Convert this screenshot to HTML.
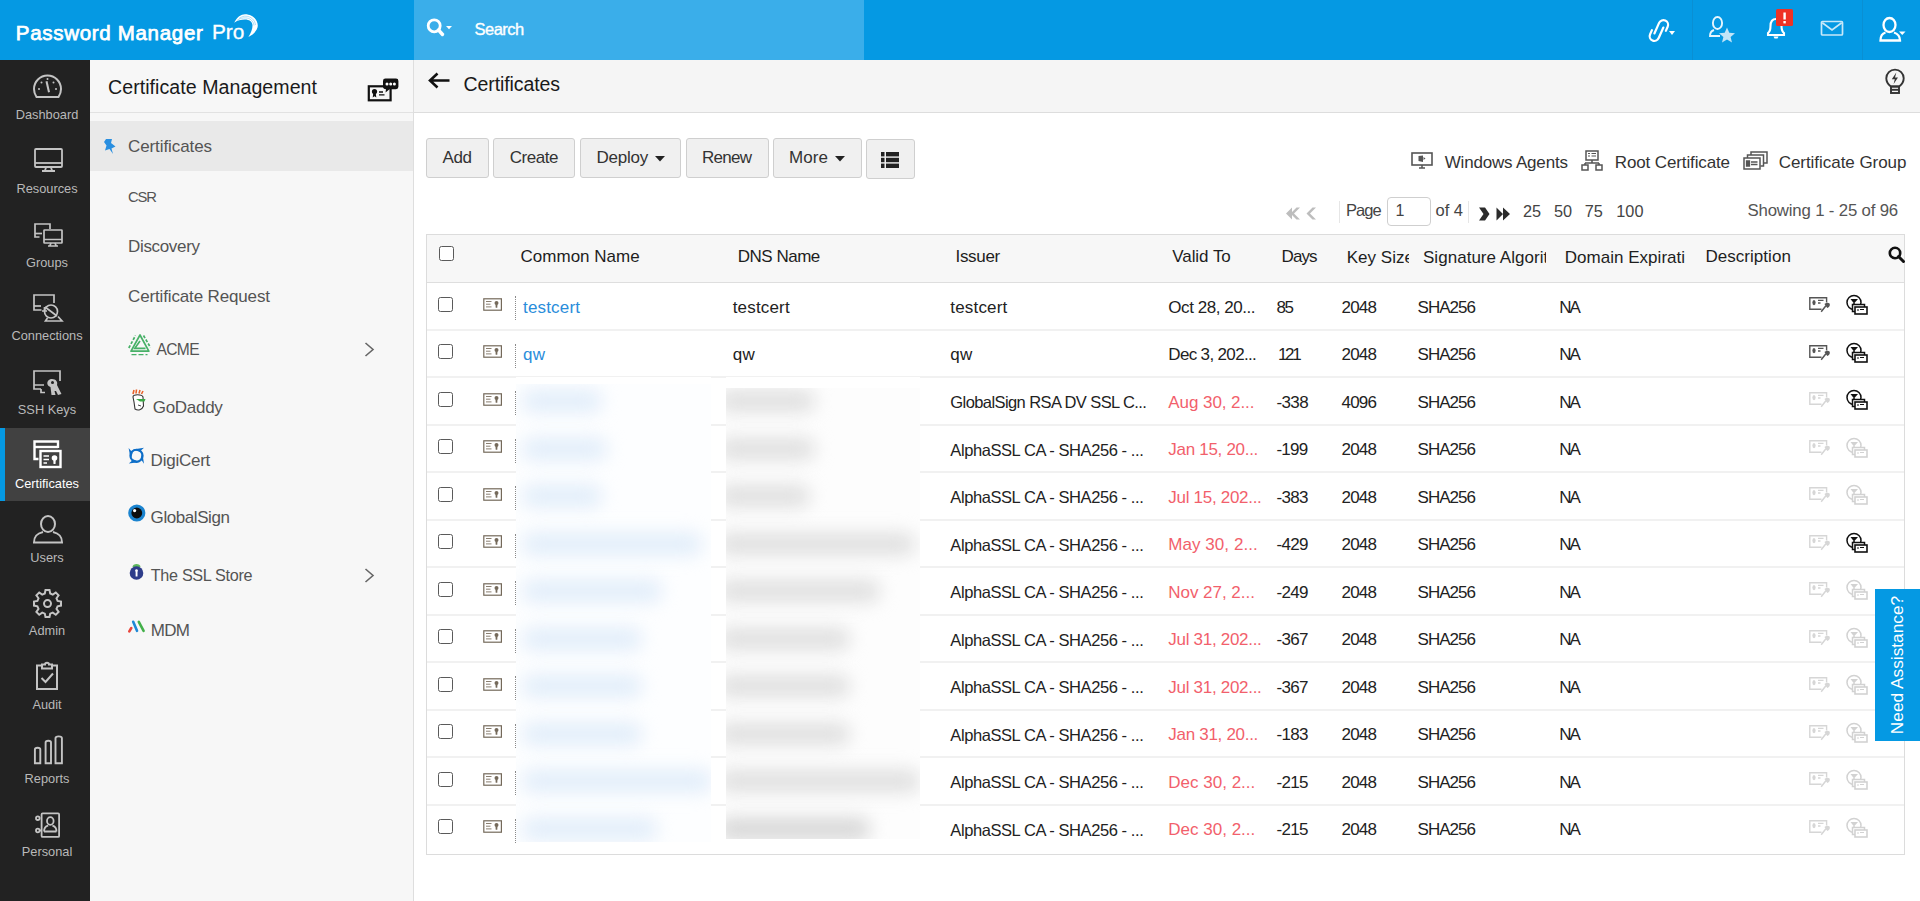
<!DOCTYPE html>
<html><head><meta charset="utf-8"><title>Certificates</title>
<style>
html,body{margin:0;padding:0;width:1920px;height:901px;overflow:hidden;background:#fff;}
body{position:relative;font-family:"Liberation Sans",sans-serif;}
.t{position:absolute;white-space:nowrap;font-family:"Liberation Sans",sans-serif;}
.r{position:absolute;box-sizing:border-box;}
svg.r{overflow:visible;}
</style></head><body>

<div class="r" style="left:0px;top:0px;width:1920px;height:60px;background:#0599e3"></div>
<div class="r" style="left:414px;top:0px;width:450px;height:60px;background:#3aaeea"></div>
<div class="t " style="left:15.8px;top:22.68px;font-size:20.5px;line-height:20.5px;color:#fff;font-weight:400;letter-spacing:0.693px;-webkit-text-stroke:0.75px #fff;">Password Manager</div>
<div class="t " style="left:212px;top:22.42px;font-size:20.8px;line-height:20.8px;color:#fff;font-weight:400;letter-spacing:-0.022px;-webkit-text-stroke:0.3px #fff;">Pro</div>
<svg class="r" style="left:232px;top:12px;" width="28" height="27" viewBox="0 0 28 27"><path d="M2.2 10.7 C5 5 9 2.2 13 2.2 C20 2.2 25.8 7 25.8 13.8 C25.8 18 21 23 16.4 24.9 C19 21 20.5 17 20.5 13.5 C20.5 9.5 17 7.5 13 7.5 C9 7.5 5 8.5 2.2 10.7 Z" fill="#fff"/><path d="M7 6.5 C10 4.5 12 4 14 4.2 C19 4.5 23 8 23.5 13 M5 8.5 C8 6.3 11 5.8 13.5 5.9 C18 6 21.5 9 22 13.5" fill="none" stroke="#7cc8f0" stroke-width="0.6"/></svg>
<svg class="r" style="left:424px;top:16px;" width="30" height="24" viewBox="0 0 30 24"><circle cx="10.2" cy="9.8" r="6" fill="none" stroke="#fff" stroke-width="2.8"/><path d="M14.5 14 L18.5 18.5" stroke="#fff" stroke-width="3.4" stroke-linecap="round"/><path d="M22 10 L28 10 L25 13.3 Z" fill="#fff"/></svg>
<div class="t " style="left:474.5px;top:21.18px;font-size:16.5px;line-height:16.5px;color:#fff;font-weight:400;letter-spacing:-0.501px;-webkit-text-stroke:0.35px #fff;">Search</div>
<div class="r" style="left:1692px;top:0px;width:1px;height:60px;background:#0a8fd3"></div>
<div class="r" style="left:1862px;top:0px;width:1px;height:60px;background:#0a8fd3"></div>
<svg class="r" style="left:1648px;top:16px;" width="30" height="28" viewBox="0 0 30 28"><g transform="rotate(24 11 14)" fill="none" stroke="#fff" stroke-width="2.2" stroke-linecap="round"><path d="M8.2 19 L8.2 7.5 A4.7 4.7 0 0 1 17.6 7.5 L17.6 12"/><path d="M14 10 L14 21.5 A4.7 4.7 0 0 1 4.6 21.5 L4.6 17"/></g><path d="M21 15 L27 15 L24 19 Z" fill="#fff"/></svg>
<svg class="r" style="left:1708px;top:16px;" width="28" height="27" viewBox="0 0 28 27"><g fill="none" stroke="#e6f5fd" stroke-width="1.9"><ellipse cx="9.5" cy="7" rx="4.6" ry="6"/><path d="M6 14 C3 15 2 17 2 20 L12 20"/></g><path d="M19 11.5 L21.3 16.8 L27 17.3 L22.6 21 L24 26.5 L19 23.5 L14 26.5 L15.4 21 L11 17.3 L16.7 16.8 Z" fill="#c2e4f7"/></svg>
<svg class="r" style="left:1765px;top:8px;" width="30" height="32" viewBox="0 0 30 32"><g fill="none" stroke="#fff" stroke-width="2.1"><path d="M3 27 L3 25 C5 23.5 5.5 21.5 5.5 18 C5.5 13.5 7.5 11 11 11 C14.5 11 16.5 13.5 16.5 18 C16.5 21.5 17 23.5 19 25 L19 27 Z"/></g><path d="M8.5 28.5 L13.5 28.5 L12.5 30.5 L9.5 30.5 Z" fill="#fff"/><rect x="11" y="1" width="17" height="17" rx="1.5" fill="#ee3226"/><rect x="18.4" y="4.5" width="2.4" height="7" fill="#fff"/><rect x="18.4" y="13" width="2.4" height="2.4" fill="#fff"/></svg>
<svg class="r" style="left:1820px;top:20px;" width="25" height="18" viewBox="0 0 25 18"><rect x="1.5" y="1.5" width="21" height="13.5" rx="1" fill="none" stroke="#c8e8f9" stroke-width="1.7"/><path d="M2.3 2.8 L12 10 L21.7 2.8" fill="none" stroke="#c8e8f9" stroke-width="1.7"/></svg>
<svg class="r" style="left:1879px;top:17px;" width="28" height="26" viewBox="0 0 28 26"><g fill="none" stroke="#fff" stroke-width="2.3"><ellipse cx="10.5" cy="8" rx="6" ry="7"/><path d="M6.5 15.5 C3 16.5 1.5 19 1.5 23.5 L21 23.5 C21 20 19.5 17 15 15.5"/></g><path d="M20 14.5 L26.5 14.5 L23.25 18 Z" fill="#fff"/></svg>
<div class="r" style="left:0px;top:60px;width:90px;height:841px;background:#222222"></div>
<div class="r" style="left:0px;top:427.5px;width:90px;height:73px;background:#414141"></div>
<div class="r" style="left:0px;top:427.5px;width:5px;height:73px;background:#0599e3"></div>
<div class="t" style="left:0;width:94px;text-align:center;top:109.32px;font-size:12.8px;line-height:12.8px;color:#b9b9b9">Dashboard</div>
<div class="t" style="left:0;width:94px;text-align:center;top:183.02px;font-size:12.8px;line-height:12.8px;color:#b9b9b9">Resources</div>
<div class="t" style="left:0;width:94px;text-align:center;top:256.72px;font-size:12.8px;line-height:12.8px;color:#b9b9b9">Groups</div>
<div class="t" style="left:0;width:94px;text-align:center;top:330.42px;font-size:12.8px;line-height:12.8px;color:#b9b9b9">Connections</div>
<div class="t" style="left:0;width:94px;text-align:center;top:404.12px;font-size:12.8px;line-height:12.8px;color:#b9b9b9">SSH Keys</div>
<div class="t" style="left:0;width:94px;text-align:center;top:477.82px;font-size:12.8px;line-height:12.8px;color:#fff">Certificates</div>
<div class="t" style="left:0;width:94px;text-align:center;top:551.52px;font-size:12.8px;line-height:12.8px;color:#b9b9b9">Users</div>
<div class="t" style="left:0;width:94px;text-align:center;top:625.22px;font-size:12.8px;line-height:12.8px;color:#b9b9b9">Admin</div>
<div class="t" style="left:0;width:94px;text-align:center;top:698.92px;font-size:12.8px;line-height:12.8px;color:#b9b9b9">Audit</div>
<div class="t" style="left:0;width:94px;text-align:center;top:772.62px;font-size:12.8px;line-height:12.8px;color:#b9b9b9">Reports</div>
<div class="t" style="left:0;width:94px;text-align:center;top:846.32px;font-size:12.8px;line-height:12.8px;color:#b9b9b9">Personal</div>
<svg class="r" style="left:33px;top:73.3px;" width="30" height="26" viewBox="0 0 30 26"><g fill="none" stroke="#c4c4c4" stroke-width="2"><path d="M3.5 24 C1.5 21 1 18.5 1 16 C1 8.5 7 2.5 14.5 2.5 C22 2.5 28 8.5 28 16 C28 18.5 27.5 21 25.5 24 Z"/></g><path d="M12.5 8.5 L14.5 8 L17 19 L15 19.5 Z" fill="#c4c4c4"/><circle cx="6" cy="16" r="1" fill="#c4c4c4"/><circle cx="23" cy="16" r="1" fill="#c4c4c4"/><circle cx="8.5" cy="9.5" r="1" fill="#c4c4c4"/><circle cx="20.5" cy="9.5" r="1" fill="#c4c4c4"/><circle cx="14.5" cy="6" r="1" fill="#c4c4c4"/></svg>
<svg class="r" style="left:34px;top:148px;" width="30" height="24" viewBox="0 0 30 24"><g fill="none" stroke="#c4c4c4" stroke-width="1.8"><rect x="1" y="1" width="27" height="18" rx="1"/><path d="M1 15 L28 15"/><path d="M12 19.5 L11 22.5 M17 19.5 L18 22.5 M8 23 L21 23"/></g></svg>
<svg class="r" style="left:34px;top:222.5px;" width="30" height="24" viewBox="0 0 30 24"><g fill="none" stroke="#c4c4c4" stroke-width="1.7"><path d="M5.5 14 L1 14 L1 1 L16 1 L16 6"/><path d="M1 10.5 L8 10.5"/><rect x="10" y="7" width="18" height="13" rx="0.5"/><path d="M10 16.5 L28 16.5 M17 20 L16 22.5 M21 20 L22 22.5 M14 23 L24 23"/></g></svg>
<svg class="r" style="left:33px;top:294px;" width="30" height="28" viewBox="0 0 30 28"><g fill="none" stroke="#c4c4c4" stroke-width="1.7"><path d="M8.5 16 L1 16 L1 1 L21 1 L21 9"/><path d="M1 12 L8 12"/><circle cx="18" cy="17.5" r="6.5"/><path d="M12 13 L24 22 M14.5 24 L12.5 27 L29 27 L25 22.5"/><path d="M9 17 L14 17 M11.5 13 L11.5 17"/></g></svg>
<svg class="r" style="left:33px;top:370px;" width="30" height="26" viewBox="0 0 30 26"><g fill="none" stroke="#c4c4c4" stroke-width="1.7"><path d="M8 19 L1 19 L1 1 L27 1 L27 11"/><path d="M8 19 L8 22.5 L12 22.5 M1 15 L11 15"/></g><path d="M19 9 C23 9 25 12 24 15 L28.5 24 L25 25 L23 21 L21.5 21 L22.5 25 L18.5 25 L17.5 17 C14.5 16 13.5 13 15 11 C16 9.5 17.5 9 19 9 Z" fill="#c4c4c4"/><circle cx="19.5" cy="12.5" r="1.5" fill="#222"/></svg>
<svg class="r" style="left:33px;top:440.2px;" width="30" height="29" viewBox="0 0 30 29"><g fill="none" stroke="#fff" stroke-width="2.4"><path d="M5.5 19 L1.5 19 L1.5 1.5 L25 1.5 L25 8"/><path d="M1.5 7 L25 7"/><rect x="7.5" y="11" width="20" height="16"/></g><path d="M10.5 16 L16 16 M10.5 19.5 L16 19.5 M10.5 23 L14 23" stroke="#fff" stroke-width="1.5"/><circle cx="21.5" cy="18" r="2.8" fill="#fff"/><path d="M20.3 20 L22.7 20 L22.5 24 L20.5 24 Z" fill="#fff"/></svg>
<svg class="r" style="left:33px;top:514.6px;" width="30" height="30" viewBox="0 0 30 30"><g fill="none" stroke="#c4c4c4" stroke-width="2"><ellipse cx="15" cy="9" rx="7" ry="8"/><path d="M10 17 C4 18.5 1 21 1 27.5 L29 27.5 C29 21 26 18.5 20 17"/></g></svg>
<svg class="r" style="left:33px;top:588.5px;" width="30" height="30" viewBox="0 0 30 30"><g fill="none" stroke="#c4c4c4" stroke-width="2"><path d="M12.5 1 L16.5 1 L17.2 4.5 L19.8 5.6 L22.8 3.5 L25.6 6.3 L23.5 9.3 L24.6 11.9 L28 12.6 L28 16.6 L24.6 17.3 L23.5 19.9 L25.6 22.9 L22.8 25.7 L19.8 23.6 L17.2 24.7 L16.5 28 L12.5 28 L11.8 24.7 L9.2 23.6 L6.2 25.7 L3.4 22.9 L5.5 19.9 L4.4 17.3 L1 16.6 L1 12.6 L4.4 11.9 L5.5 9.3 L3.4 6.3 L6.2 3.5 L9.2 5.6 L11.8 4.5 Z"/><circle cx="14.5" cy="14.6" r="3.5"/></g></svg>
<svg class="r" style="left:35px;top:661px;" width="24" height="30" viewBox="0 0 24 30"><g fill="none" stroke="#c4c4c4" stroke-width="2"><path d="M7 4.5 L2 4.5 L2 28 L22 28 L22 4.5 L17 4.5"/><path d="M7 7.5 L7 3.5 L10 3.5 C10 1 14 1 14 3.5 L17 3.5 L17 7.5 Z"/><path d="M6.5 17 L10.5 21 L18 12.5"/></g></svg>
<svg class="r" style="left:33px;top:735px;" width="30" height="31" viewBox="0 0 30 31"><g fill="none" stroke="#c4c4c4" stroke-width="1.9"><path d="M1.9 28.3 L1.9 14.5 Q1.9 12.7 4.6 12.7 Q7.3 12.7 7.3 14.5 L7.3 28.3 Z"/><path d="M12.6 28.3 L12.6 7.5 Q12.6 5.7 15.3 5.7 Q18 5.7 18 7.5 L18 28.3 Z"/><path d="M22.5 28.3 L22.5 3.2 Q22.5 1.4 25.7 1.4 Q28.9 1.4 28.9 3.2 L28.9 28.3 Z"/></g></svg>
<svg class="r" style="left:33px;top:810.5px;" width="30" height="29" viewBox="0 0 30 29"><g fill="none" stroke="#c4c4c4" stroke-width="1.8"><rect x="8.6" y="2.4" width="17.5" height="23.5" rx="1"/><circle cx="4.8" cy="7.2" r="1.8"/><circle cx="4.8" cy="19.5" r="1.8"/><path d="M6.6 19.5 L9 19.5"/><ellipse cx="17.3" cy="10" rx="3.3" ry="3.9"/><path d="M11 20.5 C11 16.5 13.5 15 15.2 14.6 M23.5 20.5 C23.5 16.5 21 15 19.4 14.6 M11 20.5 L23.5 20.5"/></g></svg>
<div class="r" style="left:90px;top:60px;width:323px;height:841px;background:#f7f7f7"></div>
<div class="r" style="left:413px;top:60px;width:1px;height:841px;background:#dedede"></div>
<div class="r" style="left:90px;top:112px;width:323px;height:1px;background:#e2e2e2"></div>
<div class="t " style="left:108px;top:77.94px;font-size:19.6px;line-height:19.6px;color:#1a1a1a;font-weight:400;letter-spacing:0.045px;">Certificate Management</div>
<svg class="r" style="left:366px;top:78px;" width="34" height="24" viewBox="0 0 34 24"><rect x="2.8" y="8.3" width="21.8" height="14" fill="none" stroke="#111" stroke-width="2.2"/><path d="M17 3 Q17 0.6 19.4 0.6 L30 0.6 Q32.4 0.6 32.4 3 L32.4 8.8 Q32.4 11.2 30 11.2 L23.5 11.2 L19.5 14.5 L20 11.2 Q17 11.2 17 8.8 Z" fill="#111"/><circle cx="21" cy="5.9" r="1.5" fill="#fff"/><circle cx="24.7" cy="5.9" r="1.5" fill="#fff"/><circle cx="28.4" cy="5.9" r="1.5" fill="#fff"/><circle cx="8.5" cy="13.5" r="2.6" fill="#111"/><path d="M7.2 15.5 L9.8 15.5 L10.3 19.5 L8.5 18.3 L6.7 19.5 Z" fill="#111"/><path d="M13 14 L17 14 M13 16.8 L18.5 16.8" stroke="#111" stroke-width="1.3"/></svg>
<div class="r" style="left:90px;top:121px;width:323px;height:50px;background:#e9e9e9"></div>
<svg class="r" style="left:103px;top:138px;" width="14" height="17" viewBox="0 0 14 17"><path d="M3 1 L9 1 L8 5 L12.5 8.5 L8.5 10.5 L10 16 L6.5 11 L2 12.5 L3.5 7.5 L1 4 Z" fill="#2a8fe0"/></svg>
<div class="t " style="left:128px;top:137.95px;font-size:17px;line-height:17px;color:#545454;font-weight:400;letter-spacing:-0.091px;">Certificates</div>
<div class="t " style="left:128px;top:189.62px;font-size:14.8px;line-height:14.8px;color:#545454;font-weight:400;letter-spacing:-1.214px;">CSR</div>
<div class="t " style="left:128px;top:237.55px;font-size:17px;line-height:17px;color:#545454;font-weight:400;letter-spacing:-0.329px;">Discovery</div>
<div class="t " style="left:128px;top:287.55px;font-size:17px;line-height:17px;color:#545454;font-weight:400;letter-spacing:-0.144px;">Certificate Request</div>
<div class="t " style="left:156.6px;top:342.24px;font-size:15.6px;line-height:15.6px;color:#545454;font-weight:400;letter-spacing:-0.695px;">ACME</div>
<div class="t " style="left:152.8px;top:398.85px;font-size:17px;line-height:17px;color:#545454;font-weight:400;letter-spacing:-0.304px;">GoDaddy</div>
<div class="t " style="left:150.6px;top:451.55px;font-size:17px;line-height:17px;color:#545454;font-weight:400;letter-spacing:-0.239px;">DigiCert</div>
<div class="t " style="left:150.6px;top:508.55px;font-size:17px;line-height:17px;color:#545454;font-weight:400;letter-spacing:-0.426px;">GlobalSign</div>
<div class="t " style="left:150.8px;top:567.03px;font-size:16.2px;line-height:16.2px;color:#545454;font-weight:400;letter-spacing:-0.327px;">The SSL Store</div>
<div class="t " style="left:150.8px;top:622.25px;font-size:17px;line-height:17px;color:#545454;font-weight:400;letter-spacing:-0.715px;">MDM</div>
<svg class="r" style="left:364px;top:341.5px;" width="11" height="15" viewBox="0 0 11 15"><path d="M1.5 1 L9 7.5 L1.5 14" fill="none" stroke="#666" stroke-width="1.6"/></svg>
<svg class="r" style="left:364px;top:568.0px;" width="11" height="15" viewBox="0 0 11 15"><path d="M1.5 1 L9 7.5 L1.5 14" fill="none" stroke="#666" stroke-width="1.6"/></svg>
<svg class="r" style="left:128px;top:334px;" width="24" height="22" viewBox="0 0 24 22"><g fill="none" stroke="#47b067" stroke-width="1.7"><path d="M0.8 14 L7.5 1.5" stroke-dasharray="3 1.6"/><path d="M15.5 1.5 L22.5 13.5" stroke-dasharray="3 1.6"/><path d="M12 1 L3 17.2 L20.8 17.2 Z" stroke-linejoin="round"/><path d="M12 7 L6.8 14.3 L17.5 14.3"/><path d="M3.5 20.6 L19.5 20.6" stroke-dasharray="5 2" stroke-width="1.4"/></g></svg>
<svg class="r" style="left:130px;top:389px;" width="17" height="24" viewBox="0 0 17 24"><path d="M3 5 L4 1 M6 4.5 L6.5 0.5 M9 4.5 L10 1 M11.5 5 L13 2" stroke="#e8622a" stroke-width="1.6"/><path d="M3 8 C3 5 12 5 13 8 L13.5 17 C12 21 8 22 5 20 L4 13 Z" fill="#fff" stroke="#333" stroke-width="1.1"/><path d="M6 10 L15.5 10 L14.5 12.5 L10 12.5 Z" fill="#3aa845"/><path d="M8 16 L11 17" stroke="#333" stroke-width="0.9"/></svg>
<svg class="r" style="left:128px;top:446px;" width="18" height="19" viewBox="0 0 18 19"><circle cx="8.5" cy="9.8" r="6.1" fill="none" stroke="#0d6ec8" stroke-width="2.1"/><path d="M5 3.6 L16 1.8 L11.5 5.8 Z M14.2 6.2 L16 17.8 L12.6 12.8 Z M12 16 L0.8 17.6 L5.4 13.6 Z M2.8 13.4 L0.6 2 L4.6 6.8 Z" fill="#0d6ec8"/></svg>
<svg class="r" style="left:128px;top:504px;" width="18" height="18" viewBox="0 0 18 18"><circle cx="8.8" cy="9" r="8.6" fill="#1b84cf"/><circle cx="8.8" cy="9" r="5.4" fill="#0d0d0d"/><circle cx="6.6" cy="6.6" r="1.6" fill="#fff"/></svg>
<svg class="r" style="left:129px;top:562px;" width="15" height="18" viewBox="0 0 15 18"><path d="M3.5 5 C3.5 1 11.5 1 11.5 5 Z" fill="#5db85c"/><circle cx="7.5" cy="11" r="6.8" fill="#2e3d8a"/><rect x="6.6" y="8.5" width="1.9" height="6" fill="#fff"/><circle cx="7.5" cy="8.5" r="1.3" fill="#fff"/></svg>
<svg class="r" style="left:128px;top:620px;" width="18" height="13" viewBox="0 0 18 13"><path d="M1.3 11.3 L3.3 8" stroke="#e9453c" stroke-width="2.6" stroke-linecap="round"/><path d="M5.2 1.8 L9 10.8" stroke="#1e88d6" stroke-width="2.6" stroke-linecap="round"/><path d="M10.8 1.8 L15.6 10.8" stroke="#43b04a" stroke-width="2.6" stroke-linecap="round"/></svg>
<div class="r" style="left:414px;top:60px;width:1506px;height:52px;background:#f5f5f5"></div>
<div class="r" style="left:414px;top:112px;width:1506px;height:1px;background:#dddddd"></div>
<svg class="r" style="left:427px;top:71px;" width="24" height="20" viewBox="0 0 24 20"><path d="M22.5 9.5 L4 9.5 M10.5 2.5 L3 9.5 L10.5 16.5" fill="none" stroke="#111" stroke-width="2.6"/></svg>
<div class="t " style="left:463.5px;top:74.62px;font-size:19.5px;line-height:19.5px;color:#1a1a1a;font-weight:400;letter-spacing:-0.091px;">Certificates</div>
<svg class="r" style="left:1884px;top:68px;" width="22" height="27" viewBox="0 0 22 27"><g fill="none" stroke="#333" stroke-width="1.9"><path d="M6.8 18.5 C4 16.5 2.3 13.8 2.3 10.3 C2.3 5.4 6.2 1.6 11 1.6 C15.8 1.6 19.7 5.4 19.7 10.3 C19.7 13.8 18 16.5 15.2 18.5 Z"/><rect x="7" y="18.5" width="8" height="6.5"/><path d="M7 21.8 L15 21.8"/></g><path d="M12.3 4.5 L7.8 11.2 L10.8 11.2 L9.6 16 L14 9.5 L11 9.5 Z" fill="#333"/></svg>
<div class="r" style="left:426px;top:138px;width:63px;height:40px;background:#f0f0f0;border:1px solid #cfcfcf;border-radius:3px"></div>
<div class="t " style="left:442.6px;top:148.85px;font-size:17px;line-height:17px;color:#333;font-weight:400;letter-spacing:-0.430px;">Add</div>
<div class="r" style="left:493px;top:138px;width:82px;height:40px;background:#f0f0f0;border:1px solid #cfcfcf;border-radius:3px"></div>
<div class="t " style="left:509.7px;top:148.85px;font-size:17px;line-height:17px;color:#333;font-weight:400;letter-spacing:-0.440px;">Create</div>
<div class="r" style="left:580px;top:138px;width:101px;height:40px;background:#f0f0f0;border:1px solid #cfcfcf;border-radius:3px"></div>
<div class="t " style="left:596.5px;top:148.85px;font-size:17px;line-height:17px;color:#333;font-weight:400;letter-spacing:-0.251px;">Deploy</div>
<svg class="r" style="left:655px;top:156px;" width="10" height="6" viewBox="0 0 10 6"><path d="M0 0 L10 0 L5 5.5 Z" fill="#222"/></svg>
<div class="r" style="left:686px;top:138px;width:83px;height:40px;background:#f0f0f0;border:1px solid #cfcfcf;border-radius:3px"></div>
<div class="t " style="left:702px;top:148.85px;font-size:17px;line-height:17px;color:#333;font-weight:400;letter-spacing:-0.739px;">Renew</div>
<div class="r" style="left:773px;top:138px;width:89px;height:40px;background:#f0f0f0;border:1px solid #cfcfcf;border-radius:3px"></div>
<div class="t " style="left:789px;top:148.85px;font-size:17px;line-height:17px;color:#333;font-weight:400;letter-spacing:0.080px;">More</div>
<svg class="r" style="left:835px;top:156px;" width="10" height="6" viewBox="0 0 10 6"><path d="M0 0 L10 0 L5 5.5 Z" fill="#222"/></svg>
<div class="r" style="left:866px;top:139px;width:49px;height:40px;background:#f0f0f0;border:1px solid #cfcfcf;border-radius:3px"></div>
<svg class="r" style="left:881px;top:151.5px;" width="18" height="16" viewBox="0 0 18 16"><g fill="#222"><rect x="0" y="0" width="3.5" height="4.4"/><rect x="5" y="0" width="13" height="4.4"/><rect x="0" y="5.8" width="3.5" height="4.4"/><rect x="5" y="5.8" width="13" height="4.4"/><rect x="0" y="11.6" width="3.5" height="4.4"/><rect x="5" y="11.6" width="13" height="4.4"/></g></svg>
<div class="t " style="left:1444.7px;top:154.25px;font-size:17px;line-height:17px;color:#333;font-weight:400;letter-spacing:-0.186px;">Windows Agents</div>
<div class="t " style="left:1614.8px;top:154.25px;font-size:17px;line-height:17px;color:#333;font-weight:400;letter-spacing:-0.129px;">Root Certificate</div>
<div class="t " style="left:1778.7px;top:154.25px;font-size:17px;line-height:17px;color:#333;font-weight:400;letter-spacing:-0.045px;">Certificate Group</div>
<svg class="r" style="left:1411px;top:152px;" width="22" height="17" viewBox="0 0 22 17"><rect x="1" y="1" width="20" height="12" fill="none" stroke="#555" stroke-width="1.6"/><path d="M8 16 L14 16 M11 13 L11 16" stroke="#555" stroke-width="1.5"/><path d="M7.5 4 L12 3.5 L12 10 L7.5 9 Z" fill="#555"/><path d="M12.5 5 L14.5 6.5 L12.5 8 Z" fill="#555"/></svg>
<svg class="r" style="left:1581px;top:150px;" width="22" height="21" viewBox="0 0 22 21"><g fill="none" stroke="#555" stroke-width="1.5"><rect x="5" y="1" width="12" height="9"/><path d="M11 10 L11 13 M4 13 L18 13 M4 13 L4 15 M18 13 L18 15"/><rect x="1" y="15" width="6" height="5"/><rect x="15" y="15" width="6" height="5"/></g><path d="M7 3.5 L9 3.5 M7 6 L9 6 M10.5 3.5 L15 3.5 M10.5 6 L15 6" stroke="#555" stroke-width="1.2"/></svg>
<svg class="r" style="left:1743px;top:151px;" width="25" height="19" viewBox="0 0 25 19"><g fill="none" stroke="#555" stroke-width="1.5"><path d="M8 4 L8 1 L24 1 L24 12 L21 12"/><path d="M4.5 7 L4.5 4 L20.5 4 L20.5 15 L17.5 15"/><rect x="1" y="7" width="16" height="11"/></g><path d="M3.5 10 L6.5 10 L6.5 15 L3.5 15 Z M8 11 L14.5 11 M8 13.5 L14.5 13.5" stroke="#555" stroke-width="1.3" fill="#555"/></svg>
<svg class="r" style="left:1285px;top:207px;" width="16" height="13" viewBox="0 0 16 13"><path d="M7 0.5 L1 6.5 L7 12.5 L7 8 L11.5 12.5 L15 12.5 L9 6.5 L15 0.5 L11.5 0.5 L7 5 Z" fill="#bdbdbd"/></svg>
<svg class="r" style="left:1306px;top:207px;" width="11" height="13" viewBox="0 0 11 13"><path d="M10 0.5 L4 6.5 L10 12.5 L6.5 12.5 L0.5 6.5 L6.5 0.5 Z" fill="#bdbdbd"/></svg>
<div class="r" style="left:1339px;top:201px;width:1px;height:22px;background:#e6e6e6"></div>
<div class="t " style="left:1346px;top:202.47px;font-size:16.5px;line-height:16.5px;color:#444;font-weight:400;letter-spacing:-0.943px;">Page</div>
<div class="r" style="left:1387px;top:197px;width:44px;height:29px;background:#fff;border:1px solid #cfcfcf;border-radius:4px"></div>
<div class="t " style="left:1395.5px;top:202.90px;font-size:16px;line-height:16px;color:#444;font-weight:400;">1</div>
<div class="t " style="left:1435.5px;top:202.47px;font-size:16.5px;line-height:16.5px;color:#444;font-weight:400;letter-spacing:-0.018px;">of 4</div>
<div class="r" style="left:1468px;top:201px;width:1px;height:22px;background:#e6e6e6"></div>
<svg class="r" style="left:1478px;top:207px;" width="12" height="14" viewBox="0 0 12 14"><path d="M1 0.5 L7 0.5 L11.5 7 L7 13.5 L1 13.5 L5.5 7 Z" fill="#2b2b2b"/></svg>
<svg class="r" style="left:1496px;top:207px;" width="15" height="14" viewBox="0 0 15 14"><path d="M0.5 0.5 L7 7 L0.5 13.5 Z M7 0.5 L14 7 L7 13.5 Z" fill="#2b2b2b"/></svg>
<div class="t " style="left:1522.9px;top:202.65px;font-size:16.3px;line-height:16.3px;color:#444;font-weight:400;">25</div>
<div class="t " style="left:1554px;top:202.65px;font-size:16.3px;line-height:16.3px;color:#444;font-weight:400;">50</div>
<div class="t " style="left:1584.8px;top:202.65px;font-size:16.3px;line-height:16.3px;color:#444;font-weight:400;">75</div>
<div class="t " style="left:1616.3px;top:202.65px;font-size:16.3px;line-height:16.3px;color:#444;font-weight:400;">100</div>
<div class="t " style="left:1747.5px;top:203.22px;font-size:16.8px;line-height:16.8px;color:#555;font-weight:400;letter-spacing:-0.171px;">Showing 1 - 25 of 96</div>
<div class="r" style="left:426px;top:234px;width:1479px;height:621px;border:1px solid #dcdcdc;background:#fff"></div>
<div class="r" style="left:427px;top:235px;width:1477px;height:47px;background:#f7f7f7"></div>
<div class="r" style="left:427px;top:281.5px;width:1477px;height:1px;background:#dedede"></div>
<div class="r" style="left:439px;top:246px;width:15px;height:15px;border:1.5px solid #5a5a5a;border-radius:2.5px;background:#fff"></div>
<div class="t " style="left:520.6px;top:247.75px;font-size:17px;line-height:17px;color:#1e1e1e;font-weight:400;letter-spacing:0.000px;">Common Name</div>
<div class="t " style="left:737.8px;top:247.75px;font-size:17px;line-height:17px;color:#1e1e1e;font-weight:400;letter-spacing:-0.491px;">DNS Name</div>
<div class="t " style="left:955.5px;top:247.75px;font-size:17px;line-height:17px;color:#1e1e1e;font-weight:400;letter-spacing:-0.305px;">Issuer</div>
<div class="t " style="left:1172.2px;top:247.75px;font-size:17px;line-height:17px;color:#1e1e1e;font-weight:400;letter-spacing:-0.044px;">Valid To</div>
<div class="t " style="left:1281.6px;top:247.75px;font-size:17px;line-height:17px;color:#1e1e1e;font-weight:400;letter-spacing:-0.953px;">Days</div>
<div class="t" style="left:1346.7px;top:247.75px;font-size:17px;line-height:20px;color:#1e1e1e;letter-spacing:0.030px;width:62px;overflow:hidden">Key Size</div>
<div class="t" style="left:1423px;top:247.75px;font-size:17px;line-height:20px;color:#1e1e1e;letter-spacing:0.030px;width:123px;overflow:hidden">Signature Algorithm</div>
<div class="t" style="left:1564.7px;top:247.75px;font-size:17px;line-height:20px;color:#1e1e1e;letter-spacing:0.030px;width:120px;overflow:hidden">Domain Expiration</div>
<div class="t " style="left:1705.5px;top:247.75px;font-size:17px;line-height:17px;color:#1e1e1e;font-weight:400;letter-spacing:0.030px;">Description</div>
<svg class="r" style="left:1888px;top:246px;" width="17" height="17" viewBox="0 0 17 17"><circle cx="7" cy="7" r="5.2" fill="none" stroke="#111" stroke-width="2.6"/><path d="M10.5 10.5 L15.5 15.5" stroke="#111" stroke-width="3" stroke-linecap="round"/></svg>
<div class="r" style="left:438px;top:296.7px;width:15px;height:15px;border:1.5px solid #5a5a5a;border-radius:2.5px;background:#fff"></div>
<svg class="r" style="left:483px;top:297.5px;" width="20" height="14" viewBox="0 0 20 14"><rect x="0.8" y="0.8" width="17.6" height="11.4" fill="none" stroke="#74695a" stroke-width="1.2"/><path d="M3 3.5 L8.5 3.5 M3 6.2 L7.5 6.2 M3 8.9 L8.5 8.9" stroke="#8a7f70" stroke-width="1"/><circle cx="13.5" cy="5" r="2" fill="#74695a"/><path d="M12.5 6.3 L14.5 6.3 L14.3 9.8 L12.7 9.8 Z" fill="#74695a"/></svg>
<div class="r" style="left:515px;top:296.0px;width:1px;height:24px;border-left:1px dotted #8a8a8a"></div>
<div class="t " style="left:523px;top:298.65px;font-size:17px;line-height:17px;color:#2a8ddb;font-weight:400;letter-spacing:0.177px;">testcert</div>
<div class="t " style="left:732.7px;top:298.65px;font-size:17px;line-height:17px;color:#222;font-weight:400;letter-spacing:0.177px;">testcert</div>
<div class="t " style="left:950.3px;top:298.65px;font-size:17px;line-height:17px;color:#222;font-weight:400;letter-spacing:0.177px;">testcert</div>
<div class="t " style="left:1168.3px;top:298.65px;font-size:17px;line-height:17px;color:#222;font-weight:400;letter-spacing:-0.447px;">Oct 28, 20...</div>
<div class="t " style="left:1276.4px;top:298.65px;font-size:17px;line-height:17px;color:#222;font-weight:400;letter-spacing:-1.270px;">85</div>
<div class="t " style="left:1341.5px;top:298.65px;font-size:17px;line-height:17px;color:#222;font-weight:400;letter-spacing:-0.775px;">2048</div>
<div class="t " style="left:1417.6px;top:298.65px;font-size:17px;line-height:17px;color:#222;font-weight:400;letter-spacing:-0.985px;">SHA256</div>
<div class="t " style="left:1559.3px;top:298.65px;font-size:17px;line-height:17px;color:#222;font-weight:400;letter-spacing:-2.030px;">NA</div>
<svg class="r" style="left:1808.5px;top:297.0px;" width="21" height="16" viewBox="0 0 21 16"><path d="M17.6 5.5 L17.6 0.8 L0.8 0.8 L0.8 12.2 L12.5 12.2" fill="none" stroke="#555" stroke-width="1.4"/><ellipse cx="5" cy="5.6" rx="1.6" ry="2.6" fill="#555"/><path d="M9 3.3 L14.5 3.3 M9 6 L11.5 6" stroke="#555" stroke-width="1.3"/><path d="M12.2 14.8 L17.5 8 M16.5 7.2 Q18.5 5.8 20 7 Q20.5 9 18.5 10 Z" stroke="#555" stroke-width="1.5" fill="#555"/></svg>
<svg class="r" style="left:1846px;top:294.0px;" width="22" height="21" viewBox="0 0 22 21"><circle cx="8" cy="8.5" r="7" fill="none" stroke="#111" stroke-width="1.5"/><path d="M4.5 5 L12 5 L8 9.5 Z" fill="#111"/><path d="M8 9 L8 11" stroke="#111" stroke-width="1.5"/><rect x="6.5" y="10.5" width="12" height="7" fill="#fff" stroke="#111" stroke-width="1.5"/><rect x="9" y="13" width="12" height="7" fill="#fff" stroke="#111" stroke-width="1.6"/><path d="M11 16 L13 16 M14 15.5 L18 15.5" stroke="#111" stroke-width="1"/></svg>
<div class="r" style="left:427px;top:329px;width:1477px;height:2px;background:#f1f1f1"></div>
<div class="r" style="left:438px;top:344.2px;width:15px;height:15px;border:1.5px solid #5a5a5a;border-radius:2.5px;background:#fff"></div>
<svg class="r" style="left:483px;top:345.0px;" width="20" height="14" viewBox="0 0 20 14"><rect x="0.8" y="0.8" width="17.6" height="11.4" fill="none" stroke="#74695a" stroke-width="1.2"/><path d="M3 3.5 L8.5 3.5 M3 6.2 L7.5 6.2 M3 8.9 L8.5 8.9" stroke="#8a7f70" stroke-width="1"/><circle cx="13.5" cy="5" r="2" fill="#74695a"/><path d="M12.5 6.3 L14.5 6.3 L14.3 9.8 L12.7 9.8 Z" fill="#74695a"/></svg>
<div class="r" style="left:515px;top:343.5px;width:1px;height:24px;border-left:1px dotted #8a8a8a"></div>
<div class="t " style="left:523px;top:346.15px;font-size:17px;line-height:17px;color:#2a8ddb;font-weight:400;letter-spacing:0.240px;">qw</div>
<div class="t " style="left:732.7px;top:346.15px;font-size:17px;line-height:17px;color:#222;font-weight:400;letter-spacing:0.240px;">qw</div>
<div class="t " style="left:950.3px;top:346.15px;font-size:17px;line-height:17px;color:#222;font-weight:400;letter-spacing:0.240px;">qw</div>
<div class="t " style="left:1168.3px;top:346.15px;font-size:17px;line-height:17px;color:#222;font-weight:400;letter-spacing:-0.658px;">Dec 3, 202...</div>
<div class="t " style="left:1278px;top:346.15px;font-size:17px;line-height:17px;color:#222;font-weight:400;letter-spacing:-2.345px;">121</div>
<div class="t " style="left:1341.5px;top:346.15px;font-size:17px;line-height:17px;color:#222;font-weight:400;letter-spacing:-0.775px;">2048</div>
<div class="t " style="left:1417.6px;top:346.15px;font-size:17px;line-height:17px;color:#222;font-weight:400;letter-spacing:-0.985px;">SHA256</div>
<div class="t " style="left:1559.3px;top:346.15px;font-size:17px;line-height:17px;color:#222;font-weight:400;letter-spacing:-2.030px;">NA</div>
<svg class="r" style="left:1808.5px;top:344.5px;" width="21" height="16" viewBox="0 0 21 16"><path d="M17.6 5.5 L17.6 0.8 L0.8 0.8 L0.8 12.2 L12.5 12.2" fill="none" stroke="#555" stroke-width="1.4"/><ellipse cx="5" cy="5.6" rx="1.6" ry="2.6" fill="#555"/><path d="M9 3.3 L14.5 3.3 M9 6 L11.5 6" stroke="#555" stroke-width="1.3"/><path d="M12.2 14.8 L17.5 8 M16.5 7.2 Q18.5 5.8 20 7 Q20.5 9 18.5 10 Z" stroke="#555" stroke-width="1.5" fill="#555"/></svg>
<svg class="r" style="left:1846px;top:341.5px;" width="22" height="21" viewBox="0 0 22 21"><circle cx="8" cy="8.5" r="7" fill="none" stroke="#111" stroke-width="1.5"/><path d="M4.5 5 L12 5 L8 9.5 Z" fill="#111"/><path d="M8 9 L8 11" stroke="#111" stroke-width="1.5"/><rect x="6.5" y="10.5" width="12" height="7" fill="#fff" stroke="#111" stroke-width="1.5"/><rect x="9" y="13" width="12" height="7" fill="#fff" stroke="#111" stroke-width="1.6"/><path d="M11 16 L13 16 M14 15.5 L18 15.5" stroke="#111" stroke-width="1"/></svg>
<div class="r" style="left:427px;top:376px;width:1477px;height:2px;background:#f1f1f1"></div>
<div class="r" style="left:438px;top:391.7px;width:15px;height:15px;border:1.5px solid #5a5a5a;border-radius:2.5px;background:#fff"></div>
<svg class="r" style="left:483px;top:392.5px;" width="20" height="14" viewBox="0 0 20 14"><rect x="0.8" y="0.8" width="17.6" height="11.4" fill="none" stroke="#74695a" stroke-width="1.2"/><path d="M3 3.5 L8.5 3.5 M3 6.2 L7.5 6.2 M3 8.9 L8.5 8.9" stroke="#8a7f70" stroke-width="1"/><circle cx="13.5" cy="5" r="2" fill="#74695a"/><path d="M12.5 6.3 L14.5 6.3 L14.3 9.8 L12.7 9.8 Z" fill="#74695a"/></svg>
<div class="r" style="left:515px;top:391.0px;width:1px;height:24px;border-left:1px dotted #8a8a8a"></div>
<div class="t " style="left:950.3px;top:394.08px;font-size:16.5px;line-height:16.5px;color:#222;font-weight:400;letter-spacing:-0.583px;">GlobalSign RSA DV SSL C...</div>
<div class="t " style="left:1168.3px;top:393.65px;font-size:17px;line-height:17px;color:#f25f6c;font-weight:400;letter-spacing:-0.069px;">Aug 30, 2...</div>
<div class="t " style="left:1276.4px;top:393.65px;font-size:17px;line-height:17px;color:#222;font-weight:400;letter-spacing:-0.567px;">-338</div>
<div class="t " style="left:1341.5px;top:393.65px;font-size:17px;line-height:17px;color:#222;font-weight:400;letter-spacing:-0.775px;">4096</div>
<div class="t " style="left:1417.6px;top:393.65px;font-size:17px;line-height:17px;color:#222;font-weight:400;letter-spacing:-0.985px;">SHA256</div>
<div class="t " style="left:1559.3px;top:393.65px;font-size:17px;line-height:17px;color:#222;font-weight:400;letter-spacing:-2.030px;">NA</div>
<svg class="r" style="left:1808.5px;top:392.0px;" width="21" height="16" viewBox="0 0 21 16"><path d="M17.6 5.5 L17.6 0.8 L0.8 0.8 L0.8 12.2 L12.5 12.2" fill="none" stroke="#d6d6d6" stroke-width="1.4"/><ellipse cx="5" cy="5.6" rx="1.6" ry="2.6" fill="#d6d6d6"/><path d="M9 3.3 L14.5 3.3 M9 6 L11.5 6" stroke="#d6d6d6" stroke-width="1.3"/><path d="M12.2 14.8 L17.5 8 M16.5 7.2 Q18.5 5.8 20 7 Q20.5 9 18.5 10 Z" stroke="#d6d6d6" stroke-width="1.5" fill="#d6d6d6"/></svg>
<svg class="r" style="left:1846px;top:389.0px;" width="22" height="21" viewBox="0 0 22 21"><circle cx="8" cy="8.5" r="7" fill="none" stroke="#111" stroke-width="1.5"/><path d="M4.5 5 L12 5 L8 9.5 Z" fill="#111"/><path d="M8 9 L8 11" stroke="#111" stroke-width="1.5"/><rect x="6.5" y="10.5" width="12" height="7" fill="#fff" stroke="#111" stroke-width="1.5"/><rect x="9" y="13" width="12" height="7" fill="#fff" stroke="#111" stroke-width="1.6"/><path d="M11 16 L13 16 M14 15.5 L18 15.5" stroke="#111" stroke-width="1"/></svg>
<div class="r" style="left:427px;top:424px;width:1477px;height:2px;background:#f1f1f1"></div>
<div class="r" style="left:438px;top:439.2px;width:15px;height:15px;border:1.5px solid #5a5a5a;border-radius:2.5px;background:#fff"></div>
<svg class="r" style="left:483px;top:440.0px;" width="20" height="14" viewBox="0 0 20 14"><rect x="0.8" y="0.8" width="17.6" height="11.4" fill="none" stroke="#74695a" stroke-width="1.2"/><path d="M3 3.5 L8.5 3.5 M3 6.2 L7.5 6.2 M3 8.9 L8.5 8.9" stroke="#8a7f70" stroke-width="1"/><circle cx="13.5" cy="5" r="2" fill="#74695a"/><path d="M12.5 6.3 L14.5 6.3 L14.3 9.8 L12.7 9.8 Z" fill="#74695a"/></svg>
<div class="r" style="left:515px;top:438.5px;width:1px;height:24px;border-left:1px dotted #8a8a8a"></div>
<div class="t " style="left:950.3px;top:441.58px;font-size:16.5px;line-height:16.5px;color:#222;font-weight:400;letter-spacing:-0.418px;">AlphaSSL CA - SHA256 - ...</div>
<div class="t " style="left:1168.3px;top:441.15px;font-size:17px;line-height:17px;color:#f25f6c;font-weight:400;letter-spacing:-0.299px;">Jan 15, 20...</div>
<div class="t " style="left:1276.4px;top:441.15px;font-size:17px;line-height:17px;color:#222;font-weight:400;letter-spacing:-0.733px;">-199</div>
<div class="t " style="left:1341.5px;top:441.15px;font-size:17px;line-height:17px;color:#222;font-weight:400;letter-spacing:-0.775px;">2048</div>
<div class="t " style="left:1417.6px;top:441.15px;font-size:17px;line-height:17px;color:#222;font-weight:400;letter-spacing:-0.985px;">SHA256</div>
<div class="t " style="left:1559.3px;top:441.15px;font-size:17px;line-height:17px;color:#222;font-weight:400;letter-spacing:-2.030px;">NA</div>
<svg class="r" style="left:1808.5px;top:439.5px;" width="21" height="16" viewBox="0 0 21 16"><path d="M17.6 5.5 L17.6 0.8 L0.8 0.8 L0.8 12.2 L12.5 12.2" fill="none" stroke="#d6d6d6" stroke-width="1.4"/><ellipse cx="5" cy="5.6" rx="1.6" ry="2.6" fill="#d6d6d6"/><path d="M9 3.3 L14.5 3.3 M9 6 L11.5 6" stroke="#d6d6d6" stroke-width="1.3"/><path d="M12.2 14.8 L17.5 8 M16.5 7.2 Q18.5 5.8 20 7 Q20.5 9 18.5 10 Z" stroke="#d6d6d6" stroke-width="1.5" fill="#d6d6d6"/></svg>
<svg class="r" style="left:1846px;top:436.5px;" width="22" height="21" viewBox="0 0 22 21"><circle cx="8" cy="8.5" r="7" fill="none" stroke="#d2d2d2" stroke-width="1.5"/><path d="M4.5 5 L12 5 L8 9.5 Z" fill="#d2d2d2"/><path d="M8 9 L8 11" stroke="#d2d2d2" stroke-width="1.5"/><rect x="6.5" y="10.5" width="12" height="7" fill="#fff" stroke="#d2d2d2" stroke-width="1.5"/><rect x="9" y="13" width="12" height="7" fill="#fff" stroke="#d2d2d2" stroke-width="1.6"/><path d="M11 16 L13 16 M14 15.5 L18 15.5" stroke="#d2d2d2" stroke-width="1"/></svg>
<div class="r" style="left:427px;top:471px;width:1477px;height:2px;background:#f1f1f1"></div>
<div class="r" style="left:438px;top:486.7px;width:15px;height:15px;border:1.5px solid #5a5a5a;border-radius:2.5px;background:#fff"></div>
<svg class="r" style="left:483px;top:487.5px;" width="20" height="14" viewBox="0 0 20 14"><rect x="0.8" y="0.8" width="17.6" height="11.4" fill="none" stroke="#74695a" stroke-width="1.2"/><path d="M3 3.5 L8.5 3.5 M3 6.2 L7.5 6.2 M3 8.9 L8.5 8.9" stroke="#8a7f70" stroke-width="1"/><circle cx="13.5" cy="5" r="2" fill="#74695a"/><path d="M12.5 6.3 L14.5 6.3 L14.3 9.8 L12.7 9.8 Z" fill="#74695a"/></svg>
<div class="r" style="left:515px;top:486.0px;width:1px;height:24px;border-left:1px dotted #8a8a8a"></div>
<div class="t " style="left:950.3px;top:489.08px;font-size:16.5px;line-height:16.5px;color:#222;font-weight:400;letter-spacing:-0.418px;">AlphaSSL CA - SHA256 - ...</div>
<div class="t " style="left:1168.3px;top:488.65px;font-size:17px;line-height:17px;color:#f25f6c;font-weight:400;letter-spacing:-0.294px;">Jul 15, 202...</div>
<div class="t " style="left:1276.4px;top:488.65px;font-size:17px;line-height:17px;color:#222;font-weight:400;letter-spacing:-0.667px;">-383</div>
<div class="t " style="left:1341.5px;top:488.65px;font-size:17px;line-height:17px;color:#222;font-weight:400;letter-spacing:-0.775px;">2048</div>
<div class="t " style="left:1417.6px;top:488.65px;font-size:17px;line-height:17px;color:#222;font-weight:400;letter-spacing:-0.985px;">SHA256</div>
<div class="t " style="left:1559.3px;top:488.65px;font-size:17px;line-height:17px;color:#222;font-weight:400;letter-spacing:-2.030px;">NA</div>
<svg class="r" style="left:1808.5px;top:487.0px;" width="21" height="16" viewBox="0 0 21 16"><path d="M17.6 5.5 L17.6 0.8 L0.8 0.8 L0.8 12.2 L12.5 12.2" fill="none" stroke="#d6d6d6" stroke-width="1.4"/><ellipse cx="5" cy="5.6" rx="1.6" ry="2.6" fill="#d6d6d6"/><path d="M9 3.3 L14.5 3.3 M9 6 L11.5 6" stroke="#d6d6d6" stroke-width="1.3"/><path d="M12.2 14.8 L17.5 8 M16.5 7.2 Q18.5 5.8 20 7 Q20.5 9 18.5 10 Z" stroke="#d6d6d6" stroke-width="1.5" fill="#d6d6d6"/></svg>
<svg class="r" style="left:1846px;top:484.0px;" width="22" height="21" viewBox="0 0 22 21"><circle cx="8" cy="8.5" r="7" fill="none" stroke="#d2d2d2" stroke-width="1.5"/><path d="M4.5 5 L12 5 L8 9.5 Z" fill="#d2d2d2"/><path d="M8 9 L8 11" stroke="#d2d2d2" stroke-width="1.5"/><rect x="6.5" y="10.5" width="12" height="7" fill="#fff" stroke="#d2d2d2" stroke-width="1.5"/><rect x="9" y="13" width="12" height="7" fill="#fff" stroke="#d2d2d2" stroke-width="1.6"/><path d="M11 16 L13 16 M14 15.5 L18 15.5" stroke="#d2d2d2" stroke-width="1"/></svg>
<div class="r" style="left:427px;top:519px;width:1477px;height:2px;background:#f1f1f1"></div>
<div class="r" style="left:438px;top:534.2px;width:15px;height:15px;border:1.5px solid #5a5a5a;border-radius:2.5px;background:#fff"></div>
<svg class="r" style="left:483px;top:535.0px;" width="20" height="14" viewBox="0 0 20 14"><rect x="0.8" y="0.8" width="17.6" height="11.4" fill="none" stroke="#74695a" stroke-width="1.2"/><path d="M3 3.5 L8.5 3.5 M3 6.2 L7.5 6.2 M3 8.9 L8.5 8.9" stroke="#8a7f70" stroke-width="1"/><circle cx="13.5" cy="5" r="2" fill="#74695a"/><path d="M12.5 6.3 L14.5 6.3 L14.3 9.8 L12.7 9.8 Z" fill="#74695a"/></svg>
<div class="r" style="left:515px;top:533.5px;width:1px;height:24px;border-left:1px dotted #8a8a8a"></div>
<div class="t " style="left:950.3px;top:536.58px;font-size:16.5px;line-height:16.5px;color:#222;font-weight:400;letter-spacing:-0.418px;">AlphaSSL CA - SHA256 - ...</div>
<div class="t " style="left:1168.3px;top:536.15px;font-size:17px;line-height:17px;color:#f25f6c;font-weight:400;letter-spacing:0.052px;">May 30, 2...</div>
<div class="t " style="left:1276.4px;top:536.15px;font-size:17px;line-height:17px;color:#222;font-weight:400;letter-spacing:-0.633px;">-429</div>
<div class="t " style="left:1341.5px;top:536.15px;font-size:17px;line-height:17px;color:#222;font-weight:400;letter-spacing:-0.775px;">2048</div>
<div class="t " style="left:1417.6px;top:536.15px;font-size:17px;line-height:17px;color:#222;font-weight:400;letter-spacing:-0.985px;">SHA256</div>
<div class="t " style="left:1559.3px;top:536.15px;font-size:17px;line-height:17px;color:#222;font-weight:400;letter-spacing:-2.030px;">NA</div>
<svg class="r" style="left:1808.5px;top:534.5px;" width="21" height="16" viewBox="0 0 21 16"><path d="M17.6 5.5 L17.6 0.8 L0.8 0.8 L0.8 12.2 L12.5 12.2" fill="none" stroke="#d6d6d6" stroke-width="1.4"/><ellipse cx="5" cy="5.6" rx="1.6" ry="2.6" fill="#d6d6d6"/><path d="M9 3.3 L14.5 3.3 M9 6 L11.5 6" stroke="#d6d6d6" stroke-width="1.3"/><path d="M12.2 14.8 L17.5 8 M16.5 7.2 Q18.5 5.8 20 7 Q20.5 9 18.5 10 Z" stroke="#d6d6d6" stroke-width="1.5" fill="#d6d6d6"/></svg>
<svg class="r" style="left:1846px;top:531.5px;" width="22" height="21" viewBox="0 0 22 21"><circle cx="8" cy="8.5" r="7" fill="none" stroke="#111" stroke-width="1.5"/><path d="M4.5 5 L12 5 L8 9.5 Z" fill="#111"/><path d="M8 9 L8 11" stroke="#111" stroke-width="1.5"/><rect x="6.5" y="10.5" width="12" height="7" fill="#fff" stroke="#111" stroke-width="1.5"/><rect x="9" y="13" width="12" height="7" fill="#fff" stroke="#111" stroke-width="1.6"/><path d="M11 16 L13 16 M14 15.5 L18 15.5" stroke="#111" stroke-width="1"/></svg>
<div class="r" style="left:427px;top:566px;width:1477px;height:2px;background:#f1f1f1"></div>
<div class="r" style="left:438px;top:581.7px;width:15px;height:15px;border:1.5px solid #5a5a5a;border-radius:2.5px;background:#fff"></div>
<svg class="r" style="left:483px;top:582.5px;" width="20" height="14" viewBox="0 0 20 14"><rect x="0.8" y="0.8" width="17.6" height="11.4" fill="none" stroke="#74695a" stroke-width="1.2"/><path d="M3 3.5 L8.5 3.5 M3 6.2 L7.5 6.2 M3 8.9 L8.5 8.9" stroke="#8a7f70" stroke-width="1"/><circle cx="13.5" cy="5" r="2" fill="#74695a"/><path d="M12.5 6.3 L14.5 6.3 L14.3 9.8 L12.7 9.8 Z" fill="#74695a"/></svg>
<div class="r" style="left:515px;top:581.0px;width:1px;height:24px;border-left:1px dotted #8a8a8a"></div>
<div class="t " style="left:950.3px;top:584.08px;font-size:16.5px;line-height:16.5px;color:#222;font-weight:400;letter-spacing:-0.418px;">AlphaSSL CA - SHA256 - ...</div>
<div class="t " style="left:1168.3px;top:583.65px;font-size:17px;line-height:17px;color:#f25f6c;font-weight:400;letter-spacing:-0.032px;">Nov 27, 2...</div>
<div class="t " style="left:1276.4px;top:583.65px;font-size:17px;line-height:17px;color:#222;font-weight:400;letter-spacing:-0.633px;">-249</div>
<div class="t " style="left:1341.5px;top:583.65px;font-size:17px;line-height:17px;color:#222;font-weight:400;letter-spacing:-0.775px;">2048</div>
<div class="t " style="left:1417.6px;top:583.65px;font-size:17px;line-height:17px;color:#222;font-weight:400;letter-spacing:-0.985px;">SHA256</div>
<div class="t " style="left:1559.3px;top:583.65px;font-size:17px;line-height:17px;color:#222;font-weight:400;letter-spacing:-2.030px;">NA</div>
<svg class="r" style="left:1808.5px;top:582.0px;" width="21" height="16" viewBox="0 0 21 16"><path d="M17.6 5.5 L17.6 0.8 L0.8 0.8 L0.8 12.2 L12.5 12.2" fill="none" stroke="#d6d6d6" stroke-width="1.4"/><ellipse cx="5" cy="5.6" rx="1.6" ry="2.6" fill="#d6d6d6"/><path d="M9 3.3 L14.5 3.3 M9 6 L11.5 6" stroke="#d6d6d6" stroke-width="1.3"/><path d="M12.2 14.8 L17.5 8 M16.5 7.2 Q18.5 5.8 20 7 Q20.5 9 18.5 10 Z" stroke="#d6d6d6" stroke-width="1.5" fill="#d6d6d6"/></svg>
<svg class="r" style="left:1846px;top:579.0px;" width="22" height="21" viewBox="0 0 22 21"><circle cx="8" cy="8.5" r="7" fill="none" stroke="#d2d2d2" stroke-width="1.5"/><path d="M4.5 5 L12 5 L8 9.5 Z" fill="#d2d2d2"/><path d="M8 9 L8 11" stroke="#d2d2d2" stroke-width="1.5"/><rect x="6.5" y="10.5" width="12" height="7" fill="#fff" stroke="#d2d2d2" stroke-width="1.5"/><rect x="9" y="13" width="12" height="7" fill="#fff" stroke="#d2d2d2" stroke-width="1.6"/><path d="M11 16 L13 16 M14 15.5 L18 15.5" stroke="#d2d2d2" stroke-width="1"/></svg>
<div class="r" style="left:427px;top:614px;width:1477px;height:2px;background:#f1f1f1"></div>
<div class="r" style="left:438px;top:629.2px;width:15px;height:15px;border:1.5px solid #5a5a5a;border-radius:2.5px;background:#fff"></div>
<svg class="r" style="left:483px;top:630.0px;" width="20" height="14" viewBox="0 0 20 14"><rect x="0.8" y="0.8" width="17.6" height="11.4" fill="none" stroke="#74695a" stroke-width="1.2"/><path d="M3 3.5 L8.5 3.5 M3 6.2 L7.5 6.2 M3 8.9 L8.5 8.9" stroke="#8a7f70" stroke-width="1"/><circle cx="13.5" cy="5" r="2" fill="#74695a"/><path d="M12.5 6.3 L14.5 6.3 L14.3 9.8 L12.7 9.8 Z" fill="#74695a"/></svg>
<div class="r" style="left:515px;top:628.5px;width:1px;height:24px;border-left:1px dotted #8a8a8a"></div>
<div class="t " style="left:950.3px;top:631.58px;font-size:16.5px;line-height:16.5px;color:#222;font-weight:400;letter-spacing:-0.418px;">AlphaSSL CA - SHA256 - ...</div>
<div class="t " style="left:1168.3px;top:631.15px;font-size:17px;line-height:17px;color:#f25f6c;font-weight:400;letter-spacing:-0.294px;">Jul 31, 202...</div>
<div class="t " style="left:1276.4px;top:631.15px;font-size:17px;line-height:17px;color:#222;font-weight:400;letter-spacing:-0.667px;">-367</div>
<div class="t " style="left:1341.5px;top:631.15px;font-size:17px;line-height:17px;color:#222;font-weight:400;letter-spacing:-0.775px;">2048</div>
<div class="t " style="left:1417.6px;top:631.15px;font-size:17px;line-height:17px;color:#222;font-weight:400;letter-spacing:-0.985px;">SHA256</div>
<div class="t " style="left:1559.3px;top:631.15px;font-size:17px;line-height:17px;color:#222;font-weight:400;letter-spacing:-2.030px;">NA</div>
<svg class="r" style="left:1808.5px;top:629.5px;" width="21" height="16" viewBox="0 0 21 16"><path d="M17.6 5.5 L17.6 0.8 L0.8 0.8 L0.8 12.2 L12.5 12.2" fill="none" stroke="#d6d6d6" stroke-width="1.4"/><ellipse cx="5" cy="5.6" rx="1.6" ry="2.6" fill="#d6d6d6"/><path d="M9 3.3 L14.5 3.3 M9 6 L11.5 6" stroke="#d6d6d6" stroke-width="1.3"/><path d="M12.2 14.8 L17.5 8 M16.5 7.2 Q18.5 5.8 20 7 Q20.5 9 18.5 10 Z" stroke="#d6d6d6" stroke-width="1.5" fill="#d6d6d6"/></svg>
<svg class="r" style="left:1846px;top:626.5px;" width="22" height="21" viewBox="0 0 22 21"><circle cx="8" cy="8.5" r="7" fill="none" stroke="#d2d2d2" stroke-width="1.5"/><path d="M4.5 5 L12 5 L8 9.5 Z" fill="#d2d2d2"/><path d="M8 9 L8 11" stroke="#d2d2d2" stroke-width="1.5"/><rect x="6.5" y="10.5" width="12" height="7" fill="#fff" stroke="#d2d2d2" stroke-width="1.5"/><rect x="9" y="13" width="12" height="7" fill="#fff" stroke="#d2d2d2" stroke-width="1.6"/><path d="M11 16 L13 16 M14 15.5 L18 15.5" stroke="#d2d2d2" stroke-width="1"/></svg>
<div class="r" style="left:427px;top:661px;width:1477px;height:2px;background:#f1f1f1"></div>
<div class="r" style="left:438px;top:676.7px;width:15px;height:15px;border:1.5px solid #5a5a5a;border-radius:2.5px;background:#fff"></div>
<svg class="r" style="left:483px;top:677.5px;" width="20" height="14" viewBox="0 0 20 14"><rect x="0.8" y="0.8" width="17.6" height="11.4" fill="none" stroke="#74695a" stroke-width="1.2"/><path d="M3 3.5 L8.5 3.5 M3 6.2 L7.5 6.2 M3 8.9 L8.5 8.9" stroke="#8a7f70" stroke-width="1"/><circle cx="13.5" cy="5" r="2" fill="#74695a"/><path d="M12.5 6.3 L14.5 6.3 L14.3 9.8 L12.7 9.8 Z" fill="#74695a"/></svg>
<div class="r" style="left:515px;top:676.0px;width:1px;height:24px;border-left:1px dotted #8a8a8a"></div>
<div class="t " style="left:950.3px;top:679.08px;font-size:16.5px;line-height:16.5px;color:#222;font-weight:400;letter-spacing:-0.418px;">AlphaSSL CA - SHA256 - ...</div>
<div class="t " style="left:1168.3px;top:678.65px;font-size:17px;line-height:17px;color:#f25f6c;font-weight:400;letter-spacing:-0.294px;">Jul 31, 202...</div>
<div class="t " style="left:1276.4px;top:678.65px;font-size:17px;line-height:17px;color:#222;font-weight:400;letter-spacing:-0.667px;">-367</div>
<div class="t " style="left:1341.5px;top:678.65px;font-size:17px;line-height:17px;color:#222;font-weight:400;letter-spacing:-0.775px;">2048</div>
<div class="t " style="left:1417.6px;top:678.65px;font-size:17px;line-height:17px;color:#222;font-weight:400;letter-spacing:-0.985px;">SHA256</div>
<div class="t " style="left:1559.3px;top:678.65px;font-size:17px;line-height:17px;color:#222;font-weight:400;letter-spacing:-2.030px;">NA</div>
<svg class="r" style="left:1808.5px;top:677.0px;" width="21" height="16" viewBox="0 0 21 16"><path d="M17.6 5.5 L17.6 0.8 L0.8 0.8 L0.8 12.2 L12.5 12.2" fill="none" stroke="#d6d6d6" stroke-width="1.4"/><ellipse cx="5" cy="5.6" rx="1.6" ry="2.6" fill="#d6d6d6"/><path d="M9 3.3 L14.5 3.3 M9 6 L11.5 6" stroke="#d6d6d6" stroke-width="1.3"/><path d="M12.2 14.8 L17.5 8 M16.5 7.2 Q18.5 5.8 20 7 Q20.5 9 18.5 10 Z" stroke="#d6d6d6" stroke-width="1.5" fill="#d6d6d6"/></svg>
<svg class="r" style="left:1846px;top:674.0px;" width="22" height="21" viewBox="0 0 22 21"><circle cx="8" cy="8.5" r="7" fill="none" stroke="#d2d2d2" stroke-width="1.5"/><path d="M4.5 5 L12 5 L8 9.5 Z" fill="#d2d2d2"/><path d="M8 9 L8 11" stroke="#d2d2d2" stroke-width="1.5"/><rect x="6.5" y="10.5" width="12" height="7" fill="#fff" stroke="#d2d2d2" stroke-width="1.5"/><rect x="9" y="13" width="12" height="7" fill="#fff" stroke="#d2d2d2" stroke-width="1.6"/><path d="M11 16 L13 16 M14 15.5 L18 15.5" stroke="#d2d2d2" stroke-width="1"/></svg>
<div class="r" style="left:427px;top:709px;width:1477px;height:2px;background:#f1f1f1"></div>
<div class="r" style="left:438px;top:724.2px;width:15px;height:15px;border:1.5px solid #5a5a5a;border-radius:2.5px;background:#fff"></div>
<svg class="r" style="left:483px;top:725.0px;" width="20" height="14" viewBox="0 0 20 14"><rect x="0.8" y="0.8" width="17.6" height="11.4" fill="none" stroke="#74695a" stroke-width="1.2"/><path d="M3 3.5 L8.5 3.5 M3 6.2 L7.5 6.2 M3 8.9 L8.5 8.9" stroke="#8a7f70" stroke-width="1"/><circle cx="13.5" cy="5" r="2" fill="#74695a"/><path d="M12.5 6.3 L14.5 6.3 L14.3 9.8 L12.7 9.8 Z" fill="#74695a"/></svg>
<div class="r" style="left:515px;top:723.5px;width:1px;height:24px;border-left:1px dotted #8a8a8a"></div>
<div class="t " style="left:950.3px;top:726.58px;font-size:16.5px;line-height:16.5px;color:#222;font-weight:400;letter-spacing:-0.418px;">AlphaSSL CA - SHA256 - ...</div>
<div class="t " style="left:1168.3px;top:726.15px;font-size:17px;line-height:17px;color:#f25f6c;font-weight:400;letter-spacing:-0.299px;">Jan 31, 20...</div>
<div class="t " style="left:1276.4px;top:726.15px;font-size:17px;line-height:17px;color:#222;font-weight:400;letter-spacing:-0.667px;">-183</div>
<div class="t " style="left:1341.5px;top:726.15px;font-size:17px;line-height:17px;color:#222;font-weight:400;letter-spacing:-0.775px;">2048</div>
<div class="t " style="left:1417.6px;top:726.15px;font-size:17px;line-height:17px;color:#222;font-weight:400;letter-spacing:-0.985px;">SHA256</div>
<div class="t " style="left:1559.3px;top:726.15px;font-size:17px;line-height:17px;color:#222;font-weight:400;letter-spacing:-2.030px;">NA</div>
<svg class="r" style="left:1808.5px;top:724.5px;" width="21" height="16" viewBox="0 0 21 16"><path d="M17.6 5.5 L17.6 0.8 L0.8 0.8 L0.8 12.2 L12.5 12.2" fill="none" stroke="#d6d6d6" stroke-width="1.4"/><ellipse cx="5" cy="5.6" rx="1.6" ry="2.6" fill="#d6d6d6"/><path d="M9 3.3 L14.5 3.3 M9 6 L11.5 6" stroke="#d6d6d6" stroke-width="1.3"/><path d="M12.2 14.8 L17.5 8 M16.5 7.2 Q18.5 5.8 20 7 Q20.5 9 18.5 10 Z" stroke="#d6d6d6" stroke-width="1.5" fill="#d6d6d6"/></svg>
<svg class="r" style="left:1846px;top:721.5px;" width="22" height="21" viewBox="0 0 22 21"><circle cx="8" cy="8.5" r="7" fill="none" stroke="#d2d2d2" stroke-width="1.5"/><path d="M4.5 5 L12 5 L8 9.5 Z" fill="#d2d2d2"/><path d="M8 9 L8 11" stroke="#d2d2d2" stroke-width="1.5"/><rect x="6.5" y="10.5" width="12" height="7" fill="#fff" stroke="#d2d2d2" stroke-width="1.5"/><rect x="9" y="13" width="12" height="7" fill="#fff" stroke="#d2d2d2" stroke-width="1.6"/><path d="M11 16 L13 16 M14 15.5 L18 15.5" stroke="#d2d2d2" stroke-width="1"/></svg>
<div class="r" style="left:427px;top:756px;width:1477px;height:2px;background:#f1f1f1"></div>
<div class="r" style="left:438px;top:771.7px;width:15px;height:15px;border:1.5px solid #5a5a5a;border-radius:2.5px;background:#fff"></div>
<svg class="r" style="left:483px;top:772.5px;" width="20" height="14" viewBox="0 0 20 14"><rect x="0.8" y="0.8" width="17.6" height="11.4" fill="none" stroke="#74695a" stroke-width="1.2"/><path d="M3 3.5 L8.5 3.5 M3 6.2 L7.5 6.2 M3 8.9 L8.5 8.9" stroke="#8a7f70" stroke-width="1"/><circle cx="13.5" cy="5" r="2" fill="#74695a"/><path d="M12.5 6.3 L14.5 6.3 L14.3 9.8 L12.7 9.8 Z" fill="#74695a"/></svg>
<div class="r" style="left:515px;top:771.0px;width:1px;height:24px;border-left:1px dotted #8a8a8a"></div>
<div class="t " style="left:950.3px;top:774.08px;font-size:16.5px;line-height:16.5px;color:#222;font-weight:400;letter-spacing:-0.418px;">AlphaSSL CA - SHA256 - ...</div>
<div class="t " style="left:1168.3px;top:773.65px;font-size:17px;line-height:17px;color:#f25f6c;font-weight:400;letter-spacing:0.004px;">Dec 30, 2...</div>
<div class="t " style="left:1276.4px;top:773.65px;font-size:17px;line-height:17px;color:#222;font-weight:400;letter-spacing:-0.667px;">-215</div>
<div class="t " style="left:1341.5px;top:773.65px;font-size:17px;line-height:17px;color:#222;font-weight:400;letter-spacing:-0.775px;">2048</div>
<div class="t " style="left:1417.6px;top:773.65px;font-size:17px;line-height:17px;color:#222;font-weight:400;letter-spacing:-0.985px;">SHA256</div>
<div class="t " style="left:1559.3px;top:773.65px;font-size:17px;line-height:17px;color:#222;font-weight:400;letter-spacing:-2.030px;">NA</div>
<svg class="r" style="left:1808.5px;top:772.0px;" width="21" height="16" viewBox="0 0 21 16"><path d="M17.6 5.5 L17.6 0.8 L0.8 0.8 L0.8 12.2 L12.5 12.2" fill="none" stroke="#d6d6d6" stroke-width="1.4"/><ellipse cx="5" cy="5.6" rx="1.6" ry="2.6" fill="#d6d6d6"/><path d="M9 3.3 L14.5 3.3 M9 6 L11.5 6" stroke="#d6d6d6" stroke-width="1.3"/><path d="M12.2 14.8 L17.5 8 M16.5 7.2 Q18.5 5.8 20 7 Q20.5 9 18.5 10 Z" stroke="#d6d6d6" stroke-width="1.5" fill="#d6d6d6"/></svg>
<svg class="r" style="left:1846px;top:769.0px;" width="22" height="21" viewBox="0 0 22 21"><circle cx="8" cy="8.5" r="7" fill="none" stroke="#d2d2d2" stroke-width="1.5"/><path d="M4.5 5 L12 5 L8 9.5 Z" fill="#d2d2d2"/><path d="M8 9 L8 11" stroke="#d2d2d2" stroke-width="1.5"/><rect x="6.5" y="10.5" width="12" height="7" fill="#fff" stroke="#d2d2d2" stroke-width="1.5"/><rect x="9" y="13" width="12" height="7" fill="#fff" stroke="#d2d2d2" stroke-width="1.6"/><path d="M11 16 L13 16 M14 15.5 L18 15.5" stroke="#d2d2d2" stroke-width="1"/></svg>
<div class="r" style="left:427px;top:804px;width:1477px;height:2px;background:#f1f1f1"></div>
<div class="r" style="left:438px;top:819.2px;width:15px;height:15px;border:1.5px solid #5a5a5a;border-radius:2.5px;background:#fff"></div>
<svg class="r" style="left:483px;top:820.0px;" width="20" height="14" viewBox="0 0 20 14"><rect x="0.8" y="0.8" width="17.6" height="11.4" fill="none" stroke="#74695a" stroke-width="1.2"/><path d="M3 3.5 L8.5 3.5 M3 6.2 L7.5 6.2 M3 8.9 L8.5 8.9" stroke="#8a7f70" stroke-width="1"/><circle cx="13.5" cy="5" r="2" fill="#74695a"/><path d="M12.5 6.3 L14.5 6.3 L14.3 9.8 L12.7 9.8 Z" fill="#74695a"/></svg>
<div class="r" style="left:515px;top:818.5px;width:1px;height:24px;border-left:1px dotted #8a8a8a"></div>
<div class="t " style="left:950.3px;top:821.58px;font-size:16.5px;line-height:16.5px;color:#222;font-weight:400;letter-spacing:-0.418px;">AlphaSSL CA - SHA256 - ...</div>
<div class="t " style="left:1168.3px;top:821.15px;font-size:17px;line-height:17px;color:#f25f6c;font-weight:400;letter-spacing:0.004px;">Dec 30, 2...</div>
<div class="t " style="left:1276.4px;top:821.15px;font-size:17px;line-height:17px;color:#222;font-weight:400;letter-spacing:-0.667px;">-215</div>
<div class="t " style="left:1341.5px;top:821.15px;font-size:17px;line-height:17px;color:#222;font-weight:400;letter-spacing:-0.775px;">2048</div>
<div class="t " style="left:1417.6px;top:821.15px;font-size:17px;line-height:17px;color:#222;font-weight:400;letter-spacing:-0.985px;">SHA256</div>
<div class="t " style="left:1559.3px;top:821.15px;font-size:17px;line-height:17px;color:#222;font-weight:400;letter-spacing:-2.030px;">NA</div>
<svg class="r" style="left:1808.5px;top:819.5px;" width="21" height="16" viewBox="0 0 21 16"><path d="M17.6 5.5 L17.6 0.8 L0.8 0.8 L0.8 12.2 L12.5 12.2" fill="none" stroke="#d6d6d6" stroke-width="1.4"/><ellipse cx="5" cy="5.6" rx="1.6" ry="2.6" fill="#d6d6d6"/><path d="M9 3.3 L14.5 3.3 M9 6 L11.5 6" stroke="#d6d6d6" stroke-width="1.3"/><path d="M12.2 14.8 L17.5 8 M16.5 7.2 Q18.5 5.8 20 7 Q20.5 9 18.5 10 Z" stroke="#d6d6d6" stroke-width="1.5" fill="#d6d6d6"/></svg>
<svg class="r" style="left:1846px;top:816.5px;" width="22" height="21" viewBox="0 0 22 21"><circle cx="8" cy="8.5" r="7" fill="none" stroke="#d2d2d2" stroke-width="1.5"/><path d="M4.5 5 L12 5 L8 9.5 Z" fill="#d2d2d2"/><path d="M8 9 L8 11" stroke="#d2d2d2" stroke-width="1.5"/><rect x="6.5" y="10.5" width="12" height="7" fill="#fff" stroke="#d2d2d2" stroke-width="1.5"/><rect x="9" y="13" width="12" height="7" fill="#fff" stroke="#d2d2d2" stroke-width="1.6"/><path d="M11 16 L13 16 M14 15.5 L18 15.5" stroke="#d2d2d2" stroke-width="1"/></svg>
<div class="r" style="left:516px;top:377px;width:195px;height:463px;background:#fff"></div>
<div class="r" style="left:726px;top:377px;width:194px;height:463px;background:#fff"></div>
<div class="r" style="left:516px;top:384px;width:195px;height:458px;background:#fdfeff;overflow:hidden">
<div class="r" style="left:6px;top:6.0px;width:80px;height:22px;background:#e1edfa;filter:blur(9px);border-radius:10px"></div>
<div class="r" style="left:6px;top:53.5px;width:85px;height:22px;background:#e1edfa;filter:blur(9px);border-radius:10px"></div>
<div class="r" style="left:6px;top:101.0px;width:80px;height:22px;background:#e1edfa;filter:blur(9px);border-radius:10px"></div>
<div class="r" style="left:6px;top:148.5px;width:180px;height:22px;background:#e1edfa;filter:blur(9px);border-radius:10px"></div>
<div class="r" style="left:6px;top:196.0px;width:140px;height:22px;background:#e1edfa;filter:blur(9px);border-radius:10px"></div>
<div class="r" style="left:6px;top:243.5px;width:120px;height:22px;background:#e1edfa;filter:blur(9px);border-radius:10px"></div>
<div class="r" style="left:6px;top:291.0px;width:120px;height:22px;background:#e1edfa;filter:blur(9px);border-radius:10px"></div>
<div class="r" style="left:6px;top:338.5px;width:120px;height:22px;background:#e1edfa;filter:blur(9px);border-radius:10px"></div>
<div class="r" style="left:6px;top:386.0px;width:190px;height:22px;background:#e1edfa;filter:blur(9px);border-radius:10px"></div>
<div class="r" style="left:6px;top:433.5px;width:135px;height:22px;background:#e1edfa;filter:blur(9px);border-radius:10px"></div>
</div>
<div class="r" style="left:726px;top:388px;width:194px;height:451px;background:#fdfdfd;overflow:hidden">
<div class="r" style="left:-8px;top:2.0px;width:97px;height:22px;background:#dfdfdf;filter:blur(9px);border-radius:10px"></div>
<div class="r" style="left:-8px;top:49.5px;width:97px;height:22px;background:#dfdfdf;filter:blur(9px);border-radius:10px"></div>
<div class="r" style="left:-8px;top:97.0px;width:92px;height:22px;background:#dfdfdf;filter:blur(9px);border-radius:10px"></div>
<div class="r" style="left:-8px;top:144.5px;width:197px;height:22px;background:#dfdfdf;filter:blur(9px);border-radius:10px"></div>
<div class="r" style="left:-8px;top:192.0px;width:162px;height:22px;background:#dfdfdf;filter:blur(9px);border-radius:10px"></div>
<div class="r" style="left:-8px;top:239.5px;width:132px;height:22px;background:#dfdfdf;filter:blur(9px);border-radius:10px"></div>
<div class="r" style="left:-8px;top:287.0px;width:132px;height:22px;background:#dfdfdf;filter:blur(9px);border-radius:10px"></div>
<div class="r" style="left:-8px;top:334.5px;width:132px;height:22px;background:#dfdfdf;filter:blur(9px);border-radius:10px"></div>
<div class="r" style="left:-8px;top:382.0px;width:202px;height:22px;background:#dfdfdf;filter:blur(9px);border-radius:10px"></div>
<div class="r" style="left:-8px;top:429.5px;width:152px;height:22px;background:#d6d6d6;filter:blur(9px);border-radius:10px"></div>
</div>
<div class="r" style="left:1875px;top:588.5px;width:45px;height:152.5px;background:#0599e3"></div>
<div class="t" style="left:1897.5px;top:664.75px;transform:translate(-50%,-50%) rotate(-90deg);font-size:17.3px;line-height:17.3px;color:#fff">Need Assistance?</div>
</body></html>
